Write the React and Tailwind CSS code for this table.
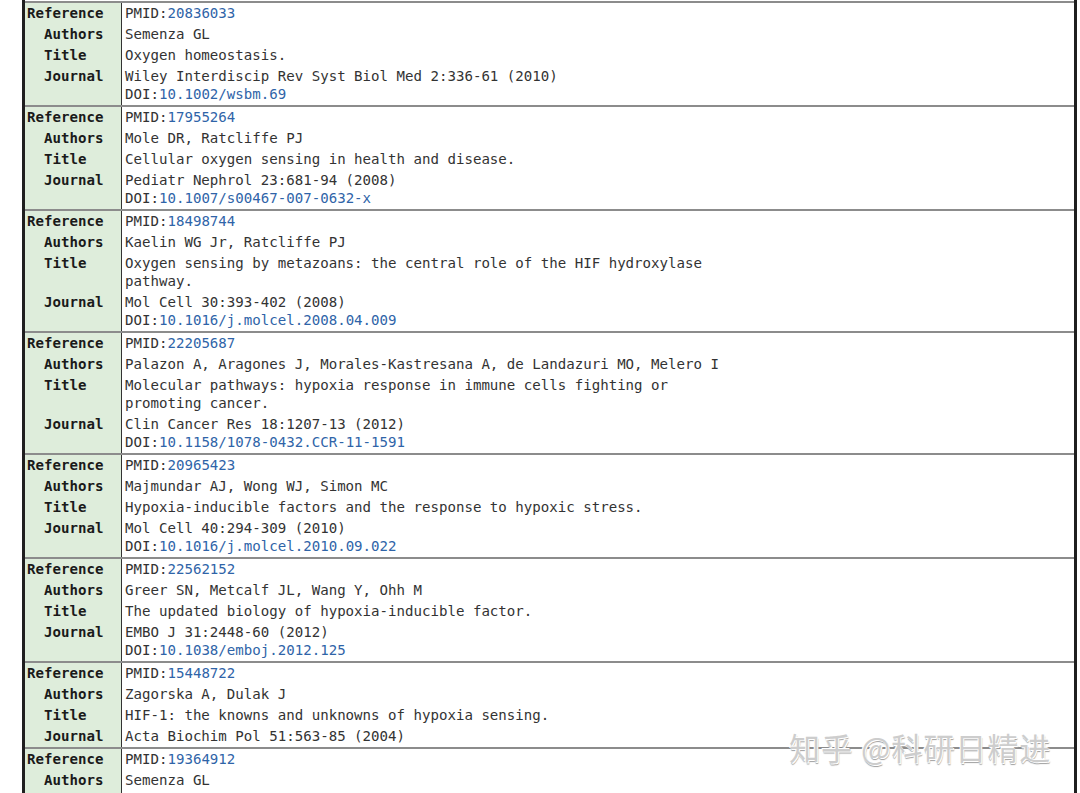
import React from 'react';

const MONO = { fontFamily: '"DejaVu Sans Mono", "Liberation Mono", monospace' };

const refs = [
  {
    pmid: '20836033',
    authors: 'Semenza GL',
    title: ['Oxygen homeostasis.'],
    journal: 'Wiley Interdiscip Rev Syst Biol Med 2:336-61 (2010)',
    doi: '10.1002/wsbm.69',
  },
  {
    pmid: '17955264',
    authors: 'Mole DR, Ratcliffe PJ',
    title: ['Cellular oxygen sensing in health and disease.'],
    journal: 'Pediatr Nephrol 23:681-94 (2008)',
    doi: '10.1007/s00467-007-0632-x',
  },
  {
    pmid: '18498744',
    authors: 'Kaelin WG Jr, Ratcliffe PJ',
    title: ['Oxygen sensing by metazoans: the central role of the HIF hydroxylase', 'pathway.'],
    journal: 'Mol Cell 30:393-402 (2008)',
    doi: '10.1016/j.molcel.2008.04.009',
  },
  {
    pmid: '22205687',
    authors: 'Palazon A, Aragones J, Morales-Kastresana A, de Landazuri MO, Melero I',
    title: ['Molecular pathways: hypoxia response in immune cells fighting or', 'promoting cancer.'],
    journal: 'Clin Cancer Res 18:1207-13 (2012)',
    doi: '10.1158/1078-0432.CCR-11-1591',
  },
  {
    pmid: '20965423',
    authors: 'Majmundar AJ, Wong WJ, Simon MC',
    title: ['Hypoxia-inducible factors and the response to hypoxic stress.'],
    journal: 'Mol Cell 40:294-309 (2010)',
    doi: '10.1016/j.molcel.2010.09.022',
  },
  {
    pmid: '22562152',
    authors: 'Greer SN, Metcalf JL, Wang Y, Ohh M',
    title: ['The updated biology of hypoxia-inducible factor.'],
    journal: 'EMBO J 31:2448-60 (2012)',
    doi: '10.1038/emboj.2012.125',
  },
  {
    pmid: '15448722',
    authors: 'Zagorska A, Dulak J',
    title: ['HIF-1: the knowns and unknowns of hypoxia sensing.'],
    journal: 'Acta Biochim Pol 51:563-85 (2004)',
    doi: null,
  },
  {
    pmid: '19364912',
    authors: 'Semenza GL',
    title: ['Regulation of oxygen homeostasis by hypoxia-inducible factor 1.'],
    journal: 'Physiology (Bethesda) 24:97-106 (2009)',
    doi: '10.1152/physiol.00045.2008',
  },
];

function Label({ children, first, last }) {
  return (
    <div
      className={`bg-[#deeddb] border-r border-[#333] font-bold text-[#1a1a1a] whitespace-pre pl-[2px] ${
        first ? 'pt-[1px]' : 'pt-[3px]'
      } ${last ? 'pb-[2px]' : ''}`}
    >
      {children}
    </div>
  );
}

function Value({ children, first, last }) {
  return (
    <div className={`pl-[3px] text-[#333] ${first ? 'pt-[1px]' : 'pt-[3px]'} ${last ? 'pb-[2px]' : ''}`}>
      {children}
    </div>
  );
}

function Entry({ r }) {
  return (
    <div className="grid grid-cols-[97px_1fr] border-b-2 border-[#8c8c8c] leading-[18px]">
      <Label first>Reference</Label>
      <Value first>
        PMID:<span className="text-[#2f64a8]">{r.pmid}</span>
      </Value>
      <Label>{'  Authors'}</Label>
      <Value>{r.authors}</Value>
      <Label>{'  Title'}</Label>
      <Value>
        {r.title.map((t, i) => (
          <div key={i}>{t}</div>
        ))}
      </Value>
      <Label last>{'  Journal'}</Label>
      <Value last>
        <div>{r.journal}</div>
        {r.doi && (
          <div>
            DOI:<span className="text-[#2f64a8]">{r.doi}</span>
          </div>
        )}
      </Value>
    </div>
  );
}

export default function App() {
  return (
    <div className="bg-white w-[1080px] h-[793px] overflow-hidden relative" style={MONO}>
      <div className="ml-[22px] w-[1055px] border-l-[3px] border-r-[3px] border-[#1f1f1f] pt-[1px] text-[14.1px]">
        <div className="border-t-2 border-[#8c8c8c]">
          {refs.map((r) => (
            <Entry key={r.pmid} r={r} />
          ))}
        </div>
      </div>
      <div
        className="absolute left-[789px] top-[729px] text-[31px] leading-[36px] text-[#cdcdcd] tracking-[1px] [text-shadow:1px_1px_0_#ffffff,-1px_-1px_0_#ffffff,1px_2px_1px_#a0a0a0]"
        style={{ fontFamily: '"Noto Sans CJK SC", "Noto Sans", sans-serif' }}
      >
        知乎 @科研日精进
      </div>
    </div>
  );
}
